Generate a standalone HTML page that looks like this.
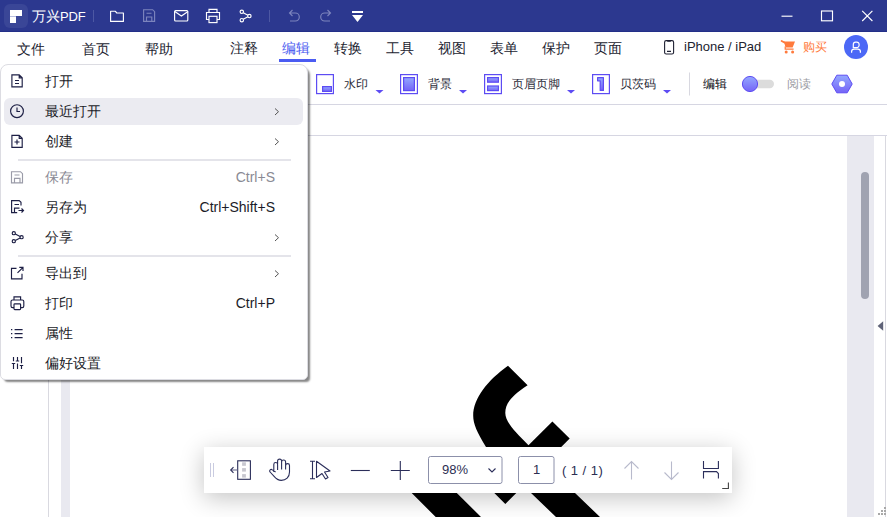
<!DOCTYPE html>
<html><head><meta charset="utf-8">
<style>
*{margin:0;padding:0;box-sizing:border-box}
html,body{width:887px;height:517px;overflow:hidden;background:#fff;font-family:"Liberation Sans",sans-serif;color:#1f2133}
.a{position:absolute}
svg{position:absolute;overflow:visible}
#title{left:0;top:0;width:887px;height:32px;background:#2c388f;border-bottom:1px solid #232f88}
.tt{font-size:14px;color:#fff;white-space:nowrap;line-height:16px}
.menu{position:absolute;top:40px;font-size:14px;line-height:18px;white-space:nowrap;color:#222330}
.tb{position:absolute;top:76px;font-size:12px;line-height:16px;white-space:nowrap;color:#2a2b38}
.mi{position:absolute;left:45px;font-size:14px;line-height:18px;white-space:nowrap;color:#1b1c28}
.sc{position:absolute;font-size:14px;line-height:18px;white-space:nowrap;color:#1b1c28;text-align:right;right:612px}
.ar{position:absolute;left:275px;width:5px;height:7px}
</style></head><body>


<!-- ===== document area ===== -->
<div class="a" style="left:48px;top:136px;width:1px;height:381px;background:#d9d9e0"></div>
<div class="a" style="left:61px;top:136px;width:9px;height:381px;background:#e9e9f0"></div>
<div class="a" style="left:847px;top:136px;width:27px;height:381px;background:#e9e9f0"></div>
<div class="a" style="left:885px;top:136px;width:1px;height:381px;background:#d9d9e0"></div>
<div class="a" style="left:861px;top:172px;width:8px;height:127px;border-radius:4px;background:#a0a3b1"></div>
<svg width="8" height="12" style="left:877px;top:320px"><path d="M6.2 1.2v9.6L0.6 6z" fill="#5f6378"/></svg>
<svg width="12" height="12" style="left:876px;top:505px" fill="#a8a8a8">
  <rect x="8" y="2" width="2" height="2"/><rect x="5" y="5" width="2" height="2"/><rect x="8" y="5" width="2" height="2"/>
  <rect x="2" y="8" width="2" height="2"/><rect x="5" y="8" width="2" height="2"/><rect x="8" y="8" width="2" height="2"/>
</svg>
<svg width="887" height="517" style="left:0;top:0">
  <path d="M508 365.7 L527.6 385.2 C510 397 505.3 404 505.3 413 C505.3 422 515 432 528.5 445.2 L552.4 421.5 L569.7 438.6 L561 447.3 L561 470 L486 470 L486 447 C477 432 473.2 424 473.2 415.7 C473.2 398 488 380 508 365.7 Z" fill="#000"/>
  <path d="M411.7 493 L456.8 493 L481 517 L435.7 517 Z M494.3 493 L516.3 493 L505.3 504 Z M531 493 L575 493 L600 517 L556 517 Z" fill="#000"/>
</svg>

<!-- ===== title bar ===== -->
<div id="title" class="a"></div>
<div class="a" style="left:4px;top:4px;width:24px;height:24px;border-radius:6px;background:#3a4697"></div>
<div class="a" style="left:10px;top:10px;width:12px;height:5.5px;background:#fff"></div>
<div class="a" style="left:10px;top:15.5px;width:6px;height:1px;background:#b9bfe0"></div>
<div class="a" style="left:10px;top:16.5px;width:6px;height:6.5px;background:#fff"></div>
<div class="a tt" style="left:32px;top:8px">万兴<span style="font-size:13px;letter-spacing:-0.2px">PDF</span></div>
<div class="a" style="left:93px;top:10px;width:1px;height:12px;background:#4d58a3"></div>
<div class="a" style="left:269px;top:10px;width:1px;height:12px;background:#4d58a3"></div>
<svg width="887" height="32" style="left:0;top:0" fill="none" stroke="#fff" stroke-width="1.15">
  <!-- folder -->
  <path d="M110.6 11.2h4.6l1.6 1.8h6.6v8.4h-12.8z" stroke-linejoin="round"/>
  <!-- save disabled -->
  <path d="M143.6 9.7h9l2 2v9.6h-11z M146.5 21.3v-4.3h5.3v4.3 M146.5 13.2h5" stroke="#7c84bd"/>
  <!-- mail -->
  <rect x="174.6" y="10.6" width="13.2" height="10.4" rx="1"/>
  <path d="M174.8 11.6l6.6 4.5 6.6-4.5"/>
  <!-- print -->
  <path d="M209 12.5v-3.2h8v3.2 M209 19.5h-2.5v-7h13v7h-2.5"/>
  <rect x="209" y="16.3" width="8" height="6.3"/>
  <!-- share -->
  <circle cx="241.8" cy="11.8" r="1.7"/><circle cx="241.8" cy="20.2" r="1.7"/><circle cx="249.4" cy="16" r="1.7"/>
  <path d="M243.3 12.7l4.6 2.5 M243.3 19.3l4.6-2.5"/>
  <!-- undo / redo disabled -->
  <path d="M292.5 10l-3 3 3 3 M289.8 13h5.5a4 4 0 0 1 0 8h-5.3" stroke="#7c84bd"/>
  <path d="M327.5 10l3 3-3 3 M330.2 13h-5.5a4 4 0 0 0 0 8h5.3" stroke="#7c84bd"/>
  <!-- min max close -->
  <path d="M781.5 16.2h11" />
  <rect x="821.5" y="11" width="11" height="9.8"/>
  <path d="M862.2 10.8l10.2 10.2 M872.4 10.8l-10.2 10.2"/>
</svg>
<div class="a" style="left:352px;top:11px;width:11px;height:2px;background:#fff"></div>
<svg width="12" height="10" style="left:352px;top:14px"><path d="M0 1h11l-5.5 7z" fill="#fff"/></svg>

<!-- ===== menu bar ===== -->
<div class="menu" style="left:17px">文件</div>
<div class="menu" style="left:82px">首页</div>
<div class="menu" style="left:145px">帮助</div>
<div class="menu" style="top:39px;left:230px">注释</div>
<div class="menu" style="top:39px;left:282px;color:#4b5bf0">编辑</div>
<div class="menu" style="top:39px;left:334px">转换</div>
<div class="menu" style="top:39px;left:386px">工具</div>
<div class="menu" style="top:39px;left:438px">视图</div>
<div class="menu" style="top:39px;left:490px">表单</div>
<div class="menu" style="top:39px;left:542px">保护</div>
<div class="menu" style="top:39px;left:594px">页面</div>
<div class="a" style="left:279px;top:59px;width:37px;height:3px;background:#4b5cf2"></div>
<svg width="12" height="16" style="left:663px;top:39px" fill="none" stroke="#1f2133" stroke-width="1.1"><rect x="1.6" y="1.6" width="9" height="13.4" rx="1.6"/><path d="M4 12.4h4 M4.2 2.2h3.6" stroke-width="1.3"/></svg>
<div class="a" style="left:684px;top:39px;font-size:13px;line-height:16px;color:#222330;white-space:nowrap">iPhone / iPad</div>
<svg width="16" height="16" style="left:780px;top:39px"><path d="M1.6 1.9L4.4 3.6" stroke="#ff7a3c" stroke-width="1.8" stroke-linecap="round"/><path d="M3.8 2.6H15L12.6 8.6H5.6Z" fill="#ff7a3c"/><path d="M5.2 7.5V10.2H13.6" fill="none" stroke="#ff7a3c" stroke-width="1.2"/><circle cx="6.2" cy="13" r="1.5" fill="#ff7a3c"/><circle cx="12.6" cy="13" r="1.5" fill="#ff7a3c"/></svg>
<div class="a" style="left:803px;top:39px;font-size:12px;line-height:16px;color:#ff7a3c;white-space:nowrap">购买</div>
<div class="a" style="left:844px;top:35px;width:24px;height:24px;border-radius:50%;background:#4c68f6"></div>
<svg width="24" height="24" style="left:844px;top:35px" fill="none" stroke="#fff" stroke-width="1.2"><path d="M11.2 12.6h1.6a2.3 2.3 0 0 0 2.3-2.3V9.4a2.3 2.3 0 0 0-2.3-2.3h-1.2a2.3 2.3 0 0 0-2.3 2.3v3.2z"/><path d="M7.6 17.8v-1.2c0-1.5 1-2.4 2.6-2.4h3.6c1.6 0 2.6.9 2.6 2.4v1.2"/></svg>


<!-- ===== toolbar ===== -->
<svg width="887" height="40" style="left:0;top:64px">
  <defs>
    <linearGradient id="g1" x1="0" y1="0" x2="0" y2="1"><stop offset="0" stop-color="#93a8ff"/><stop offset="1" stop-color="#7564f7"/></linearGradient>
  </defs>
  <g fill="none" stroke="#5d4cf3" stroke-width="1.2">
    <rect x="316.6" y="10.6" width="16.8" height="19"/>
    <rect x="400.6" y="10.6" width="16.8" height="19"/>
    <rect x="484.6" y="10.6" width="16.8" height="19"/>
    <rect x="592.6" y="10.6" width="16.8" height="19"/>
  </g>
  <rect x="322.6" y="22.6" width="8.8" height="4.8" fill="url(#g1)" stroke="#5d4cf3" stroke-width="1.2"/>
  <rect x="403.6" y="13.6" width="10.8" height="13" fill="url(#g1)" stroke="#5d4cf3" stroke-width="1.2"/>
  <rect x="487.6" y="13.6" width="10.8" height="4.6" fill="url(#g1)" stroke="#5d4cf3" stroke-width="1.2"/>
  <rect x="487.6" y="22" width="10.8" height="4.6" fill="url(#g1)" stroke="#5d4cf3" stroke-width="1.2"/>
  <path d="M597.6 13.6h5.8v12.8h-3.2v-9.6h-2.6z" fill="url(#g1)" stroke="#5d4cf3" stroke-width="1.2" stroke-linejoin="round"/>
  <g fill="#5d4cf3">
    <path d="M375.5 26h8l-4 3.6z"/>
    <path d="M459 26h8l-4 3.6z"/>
    <path d="M567 26h8l-4 3.6z"/>
    <path d="M663 26h8l-4 3.6z"/>
  </g>
  <rect x="689" y="8.5" width="1" height="23" fill="#d8d8e0"/>
  <rect x="742" y="15.8" width="32" height="8.4" rx="4.2" fill="#dcdcdc"/>
  <circle cx="750" cy="20" r="7.6" fill="url(#g1)" stroke="#5d4cf3" stroke-width="1"/>
  <path d="M836.8 11.2h10.4l5 8.8-5 8.8h-10.4l-5-8.8z" fill="url(#g1)" stroke="#5d4cf3" stroke-width="1" stroke-linejoin="round"/>
  <circle cx="842" cy="20" r="3" fill="#fff"/>
</svg>
<div class="tb" style="left:344px">水印</div>
<div class="tb" style="left:428px">背景</div>
<div class="tb" style="left:512px">页眉页脚</div>
<div class="tb" style="left:620px">贝茨码</div>
<div class="tb" style="left:703px;color:#05060f">编辑</div>
<div class="tb" style="left:787px;color:#9a9aa2">阅读</div>

<div class="a" style="left:0;top:104px;width:887px;height:1px;background:#d6d6e2"></div>
<div class="a" style="left:0;top:135px;width:887px;height:1px;background:#d6d6e2"></div>


<!-- ===== bottom toolbar ===== -->
<div class="a" style="left:204px;top:447px;width:528px;height:46px;background:#fff;box-shadow:0 5px 24px rgba(0,0,0,.24)"></div>
<svg width="528" height="46" style="left:204px;top:447px" fill="none" stroke="#2b2e5a" stroke-width="1.1">
  <path d="M6.5 16v14 M9.5 16v14" stroke="#c9cbe0" stroke-width="1"/>
  <rect x="33.7" y="13.8" width="12.7" height="18.5"/>
  <rect x="38.1" y="15.3" width="3.8" height="3.5" fill="#c8c8d0" stroke="none"/>
  <rect x="38.1" y="21.1" width="3.8" height="3.5" fill="#c8c8d0" stroke="none"/>
  <rect x="38.1" y="27.1" width="3.8" height="3.5" fill="#c8c8d0" stroke="none"/>
  <path d="M33.2 23h-6 " stroke="#8a8ca6" stroke-width="1.4"/>
  <path d="M29.5 20.2l-2.8 2.8 2.8 2.8"/>
  <path d="M69.8 25V17.4a1.9 1.9 0 0 1 3.8 0V23 M73.6 17V14.1a2 2 0 0 1 4 0V22.5 M77.6 17V15a2 2 0 0 1 4 0V22.5 M81.7 18.5a1.9 1.9 0 0 1 3.8 0V25c0 5-3.5 8.4-8.2 8.4c-3.2 0-5.2-1.6-7.2-4l-4-4.4a1.5 1.5 0 0 1 2.2-2.1l3.3 2.1" stroke-linejoin="round"/>
  <path d="M106 14.3h5 M106 31.7h5 M108.5 14.3v17.4"/>
  <path d="M112.5 14.3l13.5 9.7-5.5 1 3.5 5.5-2.5 1.5-3.5-5.5-5.5 4z" stroke-linejoin="round"/>
  <path d="M146.8 23.5h19"/>
  <path d="M186.8 23.5h19 M196.3 14v19"/>
  <rect x="224.5" y="9.5" width="73.5" height="27" rx="2" stroke="#8c90aa" stroke-width="1"/>
  <path d="M284.5 21.5l3.5 3.5 3.5-3.5" stroke-width="1.1"/>
  <rect x="314.5" y="9.5" width="35.5" height="27" rx="2" stroke="#8c90aa" stroke-width="1"/>
  <path d="M427.5 14.5v18 M420.5 21.5l7-7 7 7" stroke="#b8bacc" stroke-width="1.1"/>
  <path d="M467.5 14.5v18 M460.5 25.5l7 7 7-7" stroke="#b8bacc" stroke-width="1.1"/>
  <path d="M499.5 14v7.5h14.9V14 M499.5 31.6v-7h13l1.9 1.9v5.1"/>
  <path d="M518.2 41.5h6.2v-6" stroke="#444" stroke-width="1.1"/>
</svg>
<div class="a" style="left:442px;top:462px;font-size:13px;line-height:16px;color:#2b2e52">98%</div>
<div class="a" style="left:533px;top:462px;font-size:13px;line-height:16px;color:#2b2e52">1</div>
<div class="a" style="left:562px;top:463px;font-size:13px;line-height:16px;color:#2b2e52;white-space:pre;letter-spacing:0.45px">( 1 / 1)</div>

<!-- ===== file menu ===== -->
<div class="a" style="left:0;top:64px;width:308px;height:316px;background:#fff;border:1px solid #dcdce2;border-radius:8px 8px 5px 5px;box-shadow:3px 3px 2px -1px rgba(0,0,0,.48)"></div>
<div class="a" style="left:4px;top:98px;width:299px;height:27px;border-radius:6px;background:#ebebf1"></div>
<div class="a" style="left:18px;top:159px;width:273px;height:2px;background:#e4e4ea"></div>
<div class="a" style="left:18px;top:255px;width:273px;height:2px;background:#e4e4ea"></div>
<div class="mi" style="top:72px">打开</div>
<div class="mi" style="top:102px">最近打开</div>
<div class="mi" style="top:132px">创建</div>
<div class="mi" style="top:168px;color:#8a8a94">保存</div>
<div class="mi" style="top:198px">另存为</div>
<div class="mi" style="top:228px">分享</div>
<div class="mi" style="top:264px">导出到</div>
<div class="mi" style="top:294px">打印</div>
<div class="mi" style="top:324px">属性</div>
<div class="mi" style="top:354px">偏好设置</div>
<div class="sc" style="top:168px;color:#8a8a94">Ctrl+S</div>
<div class="sc" style="top:198px">Ctrl+Shift+S</div>
<div class="sc" style="top:294px">Ctrl+P</div>
<svg width="320" height="400" style="left:0;top:0" fill="none" stroke="#1d1f45" stroke-width="1.15">
  <path d="M275 108.5l3.5 3.2-3.5 3.3 M275 138.5l3.5 3.2-3.5 3.3 M275 234.5l3.5 3.2-3.5 3.3 M275 270.5l3.5 3.2-3.5 3.3" stroke="#555" stroke-width="1"/>
  <!-- open -->
  <path d="M11.9 74.8h7.3l3 3v9.1h-10.3z M19.2 74.8v3h3 M15 80.5h4 M15 83.5h4" />
  <!-- recent -->
  <circle cx="17" cy="111.2" r="6.4"/><path d="M17 107.5v4h3"/>
  <!-- create -->
  <path d="M11.9 135.3h7.3l3 3v9.1h-10.3z M19.2 135.3v3h3 M17 139.5v5 M14.5 142h5"/>
  <!-- save disabled -->
  <path d="M11.5 171.7h9l2 2v9.1h-11z M14.5 182.8v-4.5h5.5v4.5 M14.5 175h5" stroke="#9a9ba8"/>
  <!-- save as -->
  <path d="M21 205.5v-3.2l-1.8-1.7h-7.6v12h5.6 M14.5 212.6v-4.5h5 M14.5 204.5h4.5 M18.5 210.5h5 M21.5 208.5l2 2-2 2"/>
  <!-- share -->
  <circle cx="13.8" cy="233.2" r="1.6"/><circle cx="13.8" cy="241.2" r="1.6"/><circle cx="21.6" cy="237.2" r="1.6"/>
  <path d="M15.3 234l4.8 2.4 M15.3 240.4l4.8-2.4"/>
  <!-- export -->
  <path d="M16.5 268.3h-5v10.5h10.5v-5 M17.5 272.8l5.5-5.5 M19.3 267.3h3.7v3.7"/>
  <!-- print -->
  <path d="M14 299.8v-3h6.6v3 M14 307.6h-1.4a1.6 1.6 0 0 1-1.6-1.6v-4.4a1.6 1.6 0 0 1 1.6-1.6h9.6a1.6 1.6 0 0 1 1.6 1.6v4.4a1.6 1.6 0 0 1-1.6 1.6h-1.4"/>
  <rect x="14" y="303.8" width="6.6" height="5.8" rx="0.8"/>
  <!-- properties -->
  <path d="M11 329.6h1.3 M11 333.6h1.3 M11 337.6h1.3 M14.6 329.6h8 M14.6 333.6h8 M14.6 337.6h8"/>
  <!-- prefs -->
  <path d="M13.5 357v4.2 M13.5 363.5v5.5 M11.8 363.5h3.4 M17.5 357v4 M17.5 363.5v5.5 M15.8 361h3.4 M21.5 357v6.2 M21.5 365.5v3.5 M19.8 365.5h3.4"/>
</svg>
</body></html>
